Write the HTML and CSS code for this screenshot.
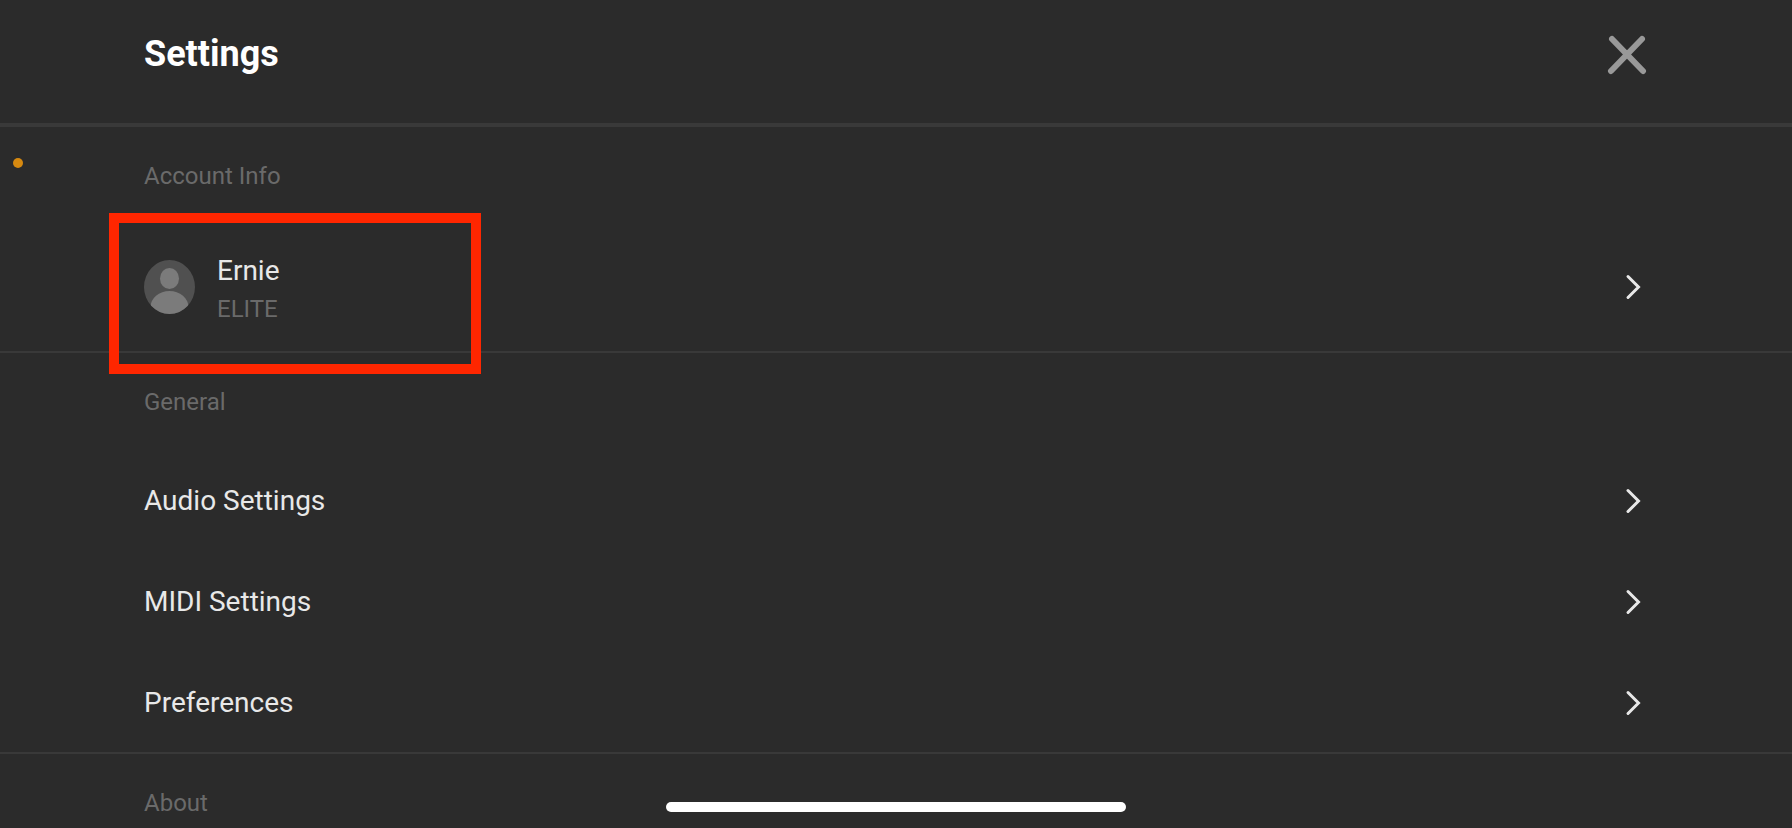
FILE: index.html
```
<!DOCTYPE html>
<html lang="en">
<head>
    <meta charset="UTF-8">
    <meta name="viewport" content="width=device-width, initial-scale=1.0">
    <title>Settings</title>
    <link rel="stylesheet" href="styles.css">
</head>
<body>

    <header class="header">
        <h1>Settings</h1>
        <button type="button" class="close" aria-label="Close">
            <svg width="40" height="40" viewBox="0 0 40 40">
                <path d="M5 4 L36 36 M35 4 L4 36" />
            </svg>
        </button>
    </header>

    <main class="content">
        <section class="section">
            <h2>Account Info</h2>
            <a href="#account" class="row account">
                <svg class="avatar" width="51" height="54" viewBox="0 0 51 54">
                    <clipPath id="avatarClip"><ellipse cx="25.5" cy="27" rx="25.5" ry="27" /></clipPath>
                    <g clip-path="url(#avatarClip)">
                        <rect width="51" height="54" fill="#505050" />
                        <ellipse cx="25.5" cy="18.5" rx="9.5" ry="10.5" fill="#7b7b7b" />
                        <ellipse cx="25.5" cy="47" rx="19" ry="16" fill="#7b7b7b" />
                    </g>
                </svg>
                <span class="user">
                    <span class="name">Ernie</span>
                    <span class="plan">ELITE</span>
                </span>
                <svg class="chevron" width="16" height="26" viewBox="0 0 16 26"><path d="M3 2.5 L13.5 13 L3 23.5" /></svg>
            </a>
            <div class="highlight"></div>
        </section>

        <section class="section">
            <h2>General</h2>
            <a href="#audio" class="row">
                Audio Settings
                <svg class="chevron" width="16" height="26" viewBox="0 0 16 26"><path d="M3 2.5 L13.5 13 L3 23.5" /></svg>
            </a>
            <a href="#midi" class="row">
                MIDI Settings
                <svg class="chevron" width="16" height="26" viewBox="0 0 16 26"><path d="M3 2.5 L13.5 13 L3 23.5" /></svg>
            </a>
            <a href="#preferences" class="row">
                Preferences
                <svg class="chevron" width="16" height="26" viewBox="0 0 16 26"><path d="M3 2.5 L13.5 13 L3 23.5" /></svg>
            </a>
        </section>

        <section class="section">
            <h2>About</h2>
        </section>
    </main>

    <!-- system overlays -->
    <div class="mic-dot"></div>
    <div class="home-bar"></div>

</body>
</html>
```

FILE: styles.css
```
* {
    box-sizing: border-box;
}

body {
    font-family: Roboto, sans-serif;
    background: #2b2b2b;
    color: #e8e8e8;
    margin: 0;
    height: 100vh;
    display: flex;
    flex-direction: column;
    overflow: hidden;
}

.header {
    display: flex;
    flex-shrink: 0;
    align-items: center;
    justify-content: space-between;
    padding: 33px 145px 47px 144px;
    border-bottom: 4px solid #393939;
}

h1 {
    margin: 0;
    font-size: 36px;
    line-height: 43px;
    font-weight: bold;
    color: #fff;
}

.close {
    display: flex;
    padding: 0;
    border: 0;
    background: none;
    cursor: pointer;
}

.close path {
    fill: none;
    stroke: #999;
    stroke-width: 6;
    stroke-linecap: round;
}

/* the list scrolls under the header */
.content {
    flex: 1;
    min-height: 0;
    overflow-y: auto;
    scrollbar-width: none;
}

.section {
    position: relative;
    border-bottom: 2px solid #393939;
}

h2 {
    margin: 0;
    padding: 2px 144px 0;
    font-size: 24px;
    line-height: 94px;
    font-weight: normal;
    color: #6a6a6a;
}

.row {
    display: flex;
    align-items: center;
    min-height: 101px;
    padding: 2px 151px 0 144px;
    font-size: 28px;
    color: inherit;
    text-decoration: none;
}

.account {
    min-height: 128px;
    padding-top: 0;
}

.user {
    display: flex;
    flex-direction: column;
    padding-top: 6px;
    margin-left: 22px;
    line-height: 38px;
}

.plan {
    font-size: 24px;
    color: #6a6a6a;
}

.chevron {
    margin-left: auto;
    fill: none;
    stroke: #e8e8e8;
    stroke-width: 3;
    stroke-linecap: round;
}

/* red frame around the user */
.highlight {
    position: absolute;
    top: 86px;
    left: 109px;
    width: 372px;
    height: 161px;
    border: 10px solid #ff2600;
    z-index: 1;
    pointer-events: none;
}

.mic-dot {
    position: fixed;
    top: 158px;
    left: 13px;
    width: 10px;
    height: 10px;
    border-radius: 50%;
    background: #d68910;
}

.home-bar {
    position: fixed;
    bottom: 16px;
    left: 50%;
    width: 460px;
    height: 10px;
    margin-left: -230px;
    border-radius: 5px;
    background: #fff;
    z-index: 2;
}
```
